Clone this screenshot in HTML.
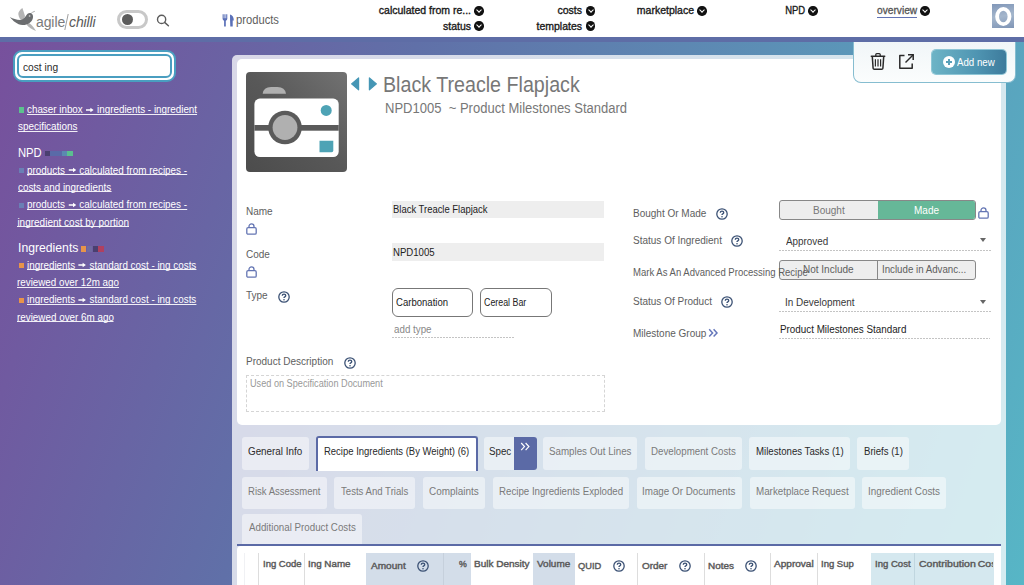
<!DOCTYPE html>
<html><head><meta charset="utf-8">
<style>
*{box-sizing:border-box;margin:0;padding:0}
html,body{width:1024px;height:585px;overflow:hidden}
body{position:relative;font-family:"Liberation Sans",sans-serif;background:linear-gradient(110deg,#784f9c 0%,#6070a8 35%,#57b6c6 100%);color:#333}
.a{position:absolute;white-space:nowrap;line-height:1}
#hdr{position:absolute;left:0;top:0;width:1024px;height:42px;background:#fff;border-bottom:5px solid #5e6da6}
.nav{font-size:10.5px;color:#1a1a1a;-webkit-text-stroke:0.35px #1a1a1a}
.dd{position:absolute;width:9.5px;height:9.5px;border-radius:50%;background:#111}
.dd:after{content:"";position:absolute;left:3.2px;top:2.4px;width:3px;height:3px;border-right:1.4px solid #fff;border-bottom:1.4px solid #fff;transform:rotate(45deg)}
#side a{color:#fff}
.sl{font-size:10px;color:#fff;border-bottom:1px solid rgba(255,255,255,0.9);line-height:10px;height:9.6px}
.sq{position:absolute;width:5.3px;height:5.3px}
#panel{position:absolute;left:232px;top:55px;width:774px;height:540px;background:rgba(255,255,255,0.75);border-radius:5px 5px 0 0}
#card{position:absolute;left:237px;top:59px;width:764px;height:366px;background:#fff;border-radius:5px}
.lbl{font-size:10px;color:#5e5e5e}
.help{position:absolute}
.tab{position:absolute;height:32px;background:#e8edf3;border-radius:3px;font-size:10px;color:#777;line-height:32px;padding-left:9px}
.tab.dk{color:#222}
.th{position:absolute;font-size:9px;color:#5a5a5a;-webkit-text-stroke:0.4px #5a5a5a;line-height:1}
.shade{position:absolute;background:#d5e1ea}
.vl{position:absolute;width:1px;background:#ddd}
</style></head><body>
<div id="hdr"></div>
<!-- logo -->
<svg class="a" style="left:5px;top:3px" width="40" height="30" viewBox="0 0 40 30">
  <path d="M17.4 4.9 C15 6.5 13.2 9 13.3 11 C13.6 14.5 15.5 17.5 18.5 18.8 L20 13 C19.2 10 18.3 7.5 17.4 4.9Z" fill="#b4b4b4"/>
  <path d="M21.5 21.5 C23.5 24 27 26.8 31 28 C29.5 25.5 28 23.5 26 21.5 L24 20Z" fill="#b4b4b4"/>
  <path d="M4.9 14.1 C8 18 12 21.8 17.5 22 C22.5 22.2 26.5 19.5 27.8 15.5 C28.5 13 27.8 10.5 25.5 10 C23.5 9.6 22 10.8 21 12.8 C19.5 15.5 17.5 17 15 17 C11.5 17 8 15.8 4.9 14.1Z" fill="#6b6d6f"/>
  <path d="M26 10.5 C27 9.5 28.3 8.7 29.8 8.3" stroke="#aaa" stroke-width="1" fill="none"/>
  <circle cx="24.6" cy="13" r="0.9" fill="#bbb"/>
</svg>
<div class="a" style="left:36px;top:14.5px;font-size:14px;color:#7a7a7a;letter-spacing:-0.1px">agile</div>
<div class="a" style="left:65.5px;top:13.5px;width:1.2px;height:16px;background:#a0a0a0;transform:skewX(-12deg)"></div>
<div class="a" style="left:69px;top:14.5px;font-size:14px;color:#5a5a5a;font-style:italic;letter-spacing:-0.1px">chilli</div>
<!-- toggle -->
<div class="a" style="left:117px;top:10px;width:31px;height:19px;border:3px solid #c8c8c8;border-radius:10px;background:#fff"></div>
<div class="a" style="left:121.5px;top:14.2px;width:11px;height:11px;border-radius:50%;background:#5c5c5c"></div>
<!-- search -->
<svg class="a" style="left:156px;top:14px" width="14" height="13" viewBox="0 0 14 13"><circle cx="5.6" cy="5.4" r="4.1" stroke="#5c5c5c" stroke-width="1.4" fill="none"/><path d="M8.6 8.4 L12.4 11.8" stroke="#5c5c5c" stroke-width="1.5" stroke-linecap="round"/></svg>
<!-- products -->
<svg class="a" style="left:222px;top:14px" width="13" height="13" viewBox="0 0 13 13"><path d="M0.6 0.3 H1.7 V4.2 H2.4 V0.3 H3.5 V4.2 H4.2 V0.3 H5.3 V4.8 Q5.3 6.4 3.8 6.8 V12.4 H2.1 V6.8 Q0.6 6.4 0.6 4.8Z" fill="#5a70b8"/><path d="M8 0.6 Q11.8 1.6 11.8 6.6 H10.7 V12.4 H8.3 Q8 6 8 0.6Z" fill="#5a70b8"/></svg>
<div class="a" style="left:236.07px;top:14px;font-size:12px;color:#5e5e5e;transform-origin:0 0;transform:scaleX(0.933)">products</div>
<!-- nav -->
<div class="a nav" style="right:553px;top:5px">calculated from re...</div><div class="dd" style="left:474px;top:6px"></div>
<div class="a nav" style="right:553px;top:21px">status</div><div class="dd" style="left:474px;top:21px"></div>
<div class="a nav" style="right:442px;top:5px">costs</div><div class="dd" style="left:585.5px;top:6px"></div>
<div class="a nav" style="right:442px;top:21px">templates</div><div class="dd" style="left:585.5px;top:21px"></div>
<div class="a nav" style="right:330px;top:5px">marketplace</div><div class="dd" style="left:697px;top:6px"></div>
<div class="a nav" style="right:218.5px;top:5px;transform-origin:100% 0;transform:scaleX(0.9)">NPD</div><div class="dd" style="left:808px;top:6px"></div>
<div class="a nav" style="left:876.8px;top:5px;color:#555;-webkit-text-stroke:0.3px #555;transform-origin:0 0;transform:scaleX(0.97)">overview</div><div class="a" style="left:877px;top:16.8px;width:40.4px;height:1.3px;background:#6273b4"></div><div class="dd" style="left:920px;top:6px"></div>
<!-- avatar -->
<div class="a" style="left:991.7px;top:4.3px;width:22.8px;height:23.4px;background:linear-gradient(170deg,#8197b8,#a4b6cc 50%,#7f95b6)"></div>
<svg class="a" style="left:992px;top:4.5px" width="23" height="23" viewBox="0 0 23 23"><ellipse cx="11.3" cy="11.5" rx="6.2" ry="7.6" stroke="#fff" stroke-width="3.8" fill="none"/></svg>

<!-- sidebar -->
<div class="a" style="left:13px;top:50px;width:163px;height:32px;border:2px solid #4a9ec0;border-radius:9px;background:#fff"></div>
<div class="a" style="left:17px;top:54px;width:155px;height:24px;border:2px solid #4a9ec0;border-radius:6px;background:#fff"></div>
<div class="a" style="left:22.73px;top:62px;font-size:10.5px;color:#2a2a2a;transform-origin:0 0;transform:scaleX(0.971)">cost ing</div>

<div class="sq" style="left:18.5px;top:107.3px;background:#5cc18e"></div>
<div class="a sl" style="left:27.0px;top:105px;transform-origin:0 0;transform:scaleX(0.983)">chaser inbox <svg width="8" height="6" viewBox="0 0 8 6" style="vertical-align:0.5px;margin:0 0.5px"><path d="M0 3 H6" stroke="#fff" stroke-width="1.3"/><path d="M4.5 0.8 L7.8 3 L4.5 5.2Z" fill="#fff"/></svg> ingredients - ingredient</div>
<div class="a sl" style="left:17.61px;top:122px;transform-origin:0 0;transform:scaleX(0.992)">specifications</div>
<div class="a" style="left:17.86px;top:147px;font-size:12px;color:#fff;transform-origin:0 0;transform:scaleX(0.937)">NPD</div>
<div class="sq" style="left:45.2px;top:151.2px;width:5px;background:#4a3f70"></div>
<div class="sq" style="left:50.2px;top:151.2px;width:11.6px;background:#5a6aa8"></div>
<div class="sq" style="left:61.8px;top:151.2px;width:5.2px;background:#5b8ab0"></div>
<div class="sq" style="left:67px;top:151.2px;width:5.7px;background:#5bbf90"></div>
<div class="sq" style="left:18.5px;top:167.8px;background:#6a7fb5"></div>
<div class="a sl" style="left:26.61px;top:165.5px;transform-origin:0 0;transform:scaleX(0.989)">products <svg width="8" height="6" viewBox="0 0 8 6" style="vertical-align:0.5px;margin:0 0.5px"><path d="M0 3 H6" stroke="#fff" stroke-width="1.3"/><path d="M4.5 0.8 L7.8 3 L4.5 5.2Z" fill="#fff"/></svg> calculated from recipes -</div>
<div class="a sl" style="left:18.4px;top:182.5px;transform-origin:0 0;transform:scaleX(0.985)">costs and ingredients</div>
<div class="sq" style="left:18.5px;top:202.5px;background:#6a7fb5"></div>
<div class="a sl" style="left:26.61px;top:200px;transform-origin:0 0;transform:scaleX(0.989)">products <svg width="8" height="6" viewBox="0 0 8 6" style="vertical-align:0.5px;margin:0 0.5px"><path d="M0 3 H6" stroke="#fff" stroke-width="1.3"/><path d="M4.5 0.8 L7.8 3 L4.5 5.2Z" fill="#fff"/></svg> calculated from recipes -</div>
<div class="a sl" style="left:17.39px;top:217.5px;transform-origin:0 0;transform:scaleX(1.0)">ingredient cost by portion</div>
<div class="a" style="left:17.83px;top:242px;font-size:12.6px;color:#fff;transform-origin:0 0;transform:scaleX(0.969)">Ingredients</div>
<div class="sq" style="left:81.3px;top:246.3px;width:5.2px;background:#e8944a"></div>
<div class="sq" style="left:86.5px;top:246.3px;width:5.5px;background:#6f6aa0"></div>
<div class="sq" style="left:93px;top:246.3px;width:5px;background:#4a3f70"></div>
<div class="sq" style="left:98px;top:246.3px;width:5.5px;background:#b04060"></div>
<div class="sq" style="left:18.5px;top:263.2px;background:#e8944a"></div>
<div class="a sl" style="left:26.6px;top:260.5px;transform-origin:0 0;transform:scaleX(0.985)">ingredients <svg width="8" height="6" viewBox="0 0 8 6" style="vertical-align:0.5px;margin:0 0.5px"><path d="M0 3 H6" stroke="#fff" stroke-width="1.3"/><path d="M4.5 0.8 L7.8 3 L4.5 5.2Z" fill="#fff"/></svg> standard cost - ing costs</div>
<div class="a sl" style="left:17.42px;top:278px;transform-origin:0 0;transform:scaleX(0.981)">reviewed over 12m ago</div>
<div class="sq" style="left:18.5px;top:297.5px;background:#e8944a"></div>
<div class="a sl" style="left:26.6px;top:295px;transform-origin:0 0;transform:scaleX(0.985)">ingredients <svg width="8" height="6" viewBox="0 0 8 6" style="vertical-align:0.5px;margin:0 0.5px"><path d="M0 3 H6" stroke="#fff" stroke-width="1.3"/><path d="M4.5 0.8 L7.8 3 L4.5 5.2Z" fill="#fff"/></svg> standard cost - ing costs</div>
<div class="a sl" style="left:17.42px;top:312.5px;transform-origin:0 0;transform:scaleX(0.985)">reviewed over 6m ago</div>

<!-- panel -->
<div id="panel"></div>
<div id="card"></div>

<!-- product header -->
<div class="a" style="left:246px;top:72px;width:101px;height:100px;border-radius:4px;background:linear-gradient(45deg,#4c4c4c 0%,#585858 50%,#727272 100%)"></div>
<svg class="a" style="left:246px;top:72px" width="101" height="100" viewBox="0 0 101 100">
 <path d="M16.6 21.8 Q17.5 15 25 15 H31.5 Q39 15 40 21.8Z" fill="#b0b0b0"/>
 <rect x="8.4" y="26.6" width="84.3" height="58.4" rx="5.5" fill="#fff"/>
 <rect x="8.4" y="53" width="84.3" height="5.7" fill="#5a5a5a"/>
 <circle cx="39" cy="55.5" r="16.8" fill="#5a5a5a"/>
 <circle cx="39" cy="55.5" r="12.4" fill="#b0b0b0"/>
 <circle cx="80.2" cy="38.4" r="5.5" fill="#4ea3b5"/>
 <path d="M73.5 68.7 H87.3 V78.5 Q87.3 80.2 85.6 80.2 H73.5Z" fill="#4ea3b5"/>
</svg>
<svg class="a" style="left:350px;top:77px" width="28" height="14" viewBox="0 0 28 14"><path d="M8.6 1 V12.8 L1.6 6.9Z" fill="#4596b5" stroke="#4596b5" stroke-width="1.2" stroke-linejoin="round"/><path d="M19.4 1 V12.8 L26.4 6.9Z" fill="#4596b5" stroke="#4596b5" stroke-width="1.2" stroke-linejoin="round"/></svg>
<div class="a" style="left:383px;top:74px;font-size:22px;color:#777;transform-origin:0 0;transform:scaleX(0.894)">Black Treacle Flapjack</div>
<div class="a" style="left:385px;top:101px;font-size:14px;color:#777;transform-origin:0 0;transform:scaleX(0.93)">NPD1005&nbsp; ~ Product Milestones Standard</div>

<!-- form left -->
<div class="a lbl" style="left:246px;top:207.3px">Name</div>
<svg class="a lock" style="left:246px;top:223px" width="11" height="12" viewBox="0 0 11 12"><path d="M3 4.6 V3.4 A2.5 2.5 0 0 1 8 3.4 V4.6" stroke="#6475b3" stroke-width="1.3" fill="none"/><rect x="0.8" y="4.6" width="9.4" height="6.6" rx="1.3" stroke="#6475b3" stroke-width="1.3" fill="none"/></svg>
<div class="a" style="left:392px;top:201px;width:212px;height:17px;background:#eee"></div>
<div class="a" style="left:393.15px;top:204.7px;font-size:10px;color:#222;transform-origin:0 0;transform:scaleX(0.945)">Black Treacle Flapjack</div>
<div class="a lbl" style="left:246px;top:250.3px">Code</div>
<svg class="a lock" style="left:246px;top:266px" width="11" height="12" viewBox="0 0 11 12"><path d="M3 4.6 V3.4 A2.5 2.5 0 0 1 8 3.4 V4.6" stroke="#6475b3" stroke-width="1.3" fill="none"/><rect x="0.8" y="4.6" width="9.4" height="6.6" rx="1.3" stroke="#6475b3" stroke-width="1.3" fill="none"/></svg>
<div class="a" style="left:392px;top:243px;width:212px;height:18px;background:#eee"></div>
<div class="a" style="left:393.14px;top:247.8px;font-size:10px;color:#222;transform-origin:0 0;transform:scaleX(0.96)">NPD1005</div>
<div class="a lbl" style="left:246px;top:291.3px">Type</div>
<svg class="help" style="left:278px;top:290.8px" width="12" height="12" viewBox="0 0 12 12"><circle cx="6" cy="6" r="5.2" stroke="#3c5275" stroke-width="1.3" fill="none"/><path d="M4.3 4.7 Q4.3 3.1 6 3.1 Q7.7 3.1 7.7 4.6 Q7.7 5.5 6.8 5.9 Q6 6.3 6 7.1" stroke="#3c5275" stroke-width="1.4" fill="none"/><circle cx="6" cy="8.7" r="0.8" fill="#3c5275"/></svg>
<div class="a" style="left:392px;top:288px;width:81px;height:29px;border:1px solid #777;border-radius:6px"></div>
<div class="a" style="left:396.45px;top:297.6px;font-size:10px;color:#222;transform-origin:0 0;transform:scaleX(0.955)">Carbonation</div>
<div class="a" style="left:480px;top:288px;width:72px;height:29px;border:1px solid #777;border-radius:6px"></div>
<div class="a" style="left:484.21px;top:297.6px;font-size:10px;color:#222;transform-origin:0 0;transform:scaleX(0.885)">Cereal Bar</div>
<div class="a" style="left:394.1px;top:324.5px;font-size:10px;color:#888;transform-origin:0 0;transform:scaleX(0.979)">add type</div>
<div class="a" style="left:392px;top:337px;width:123px;height:1px;background:repeating-linear-gradient(90deg,#c4c4c4 0 2px,transparent 2px 3px)"></div>
<div class="a lbl" style="left:246px;top:357.3px">Product Description</div>
<svg class="help" style="left:344px;top:356.8px" width="12" height="12" viewBox="0 0 12 12"><circle cx="6" cy="6" r="5.2" stroke="#3c5275" stroke-width="1.3" fill="none"/><path d="M4.3 4.7 Q4.3 3.1 6 3.1 Q7.7 3.1 7.7 4.6 Q7.7 5.5 6.8 5.9 Q6 6.3 6 7.1" stroke="#3c5275" stroke-width="1.4" fill="none"/><circle cx="6" cy="8.7" r="0.8" fill="#3c5275"/></svg>
<div class="a" style="left:246px;top:375px;width:359px;height:37px;border:1px dashed #d5d5d5"></div>
<div class="a" style="left:250px;top:379px;font-size:10px;color:#999;transform-origin:0 0;transform:scaleX(0.915)">Used on Specification Document</div>

<!-- form right -->
<div class="a lbl" style="left:633px;top:209.3px">Bought Or Made</div>
<svg class="help" style="left:716px;top:207.8px" width="12" height="12" viewBox="0 0 12 12"><circle cx="6" cy="6" r="5.2" stroke="#3c5275" stroke-width="1.3" fill="none"/><path d="M4.3 4.7 Q4.3 3.1 6 3.1 Q7.7 3.1 7.7 4.6 Q7.7 5.5 6.8 5.9 Q6 6.3 6 7.1" stroke="#3c5275" stroke-width="1.4" fill="none"/><circle cx="6" cy="8.7" r="0.8" fill="#3c5275"/></svg>
<div class="a" style="left:779px;top:200px;width:197px;height:20px;border:1px solid #888;border-radius:3px;background:#eee;overflow:hidden"><div style="position:absolute;left:98px;top:0;width:99px;height:20px;background:#66b898"></div></div>
<div class="a" style="left:813px;top:205.5px;font-size:10px;color:#777">Bought</div>
<div class="a" style="left:914px;top:205.5px;font-size:10px;color:#fff">Made</div>
<svg class="a lock" style="left:978px;top:207px" width="11" height="12" viewBox="0 0 11 12"><path d="M3 4.6 V3.4 A2.5 2.5 0 0 1 8 3.4 V4.6" stroke="#6475b3" stroke-width="1.3" fill="none"/><rect x="0.8" y="4.6" width="9.4" height="6.6" rx="1.3" stroke="#6475b3" stroke-width="1.3" fill="none"/></svg>
<div class="a lbl" style="left:633px;top:236.3px">Status Of Ingredient</div>
<svg class="help" style="left:731px;top:234.8px" width="12" height="12" viewBox="0 0 12 12"><circle cx="6" cy="6" r="5.2" stroke="#3c5275" stroke-width="1.3" fill="none"/><path d="M4.3 4.7 Q4.3 3.1 6 3.1 Q7.7 3.1 7.7 4.6 Q7.7 5.5 6.8 5.9 Q6 6.3 6 7.1" stroke="#3c5275" stroke-width="1.4" fill="none"/><circle cx="6" cy="8.7" r="0.8" fill="#3c5275"/></svg>
<div class="a" style="left:785.7px;top:236.8px;font-size:10px;color:#383838;transform-origin:0 0;transform:scaleX(0.986)">Approved</div>
<div class="a" style="left:980px;top:238px;width:0;height:0;border-left:3.5px solid transparent;border-right:3.5px solid transparent;border-top:4px solid #666"></div>
<div class="a" style="left:779px;top:250px;width:212px;height:1px;background:repeating-linear-gradient(90deg,#c4c4c4 0 2px,transparent 2px 3px)"></div>
<div class="a" style="left:779px;top:260px;width:197px;height:20px;border:1px solid #888;border-radius:3px;background:#eee"><div style="position:absolute;left:97.4px;top:0;width:1px;height:18px;background:#888"></div></div>
<div class="a lbl" style="left:633px;top:268.3px;transform-origin:0 0;transform:scaleX(0.953)">Mark As An Advanced Processing Recipe</div>
<div class="a" style="left:803.0px;top:265px;font-size:10px;color:#606060;transform-origin:0 0;transform:scaleX(1.0)">Not Include</div>
<div class="a" style="left:882.03px;top:265px;font-size:10px;color:#606060;transform-origin:0 0;transform:scaleX(0.971)">Include in Advanc...</div>
<div class="a lbl" style="left:633px;top:297.1px">Status Of Product</div>
<svg class="help" style="left:721px;top:295.8px" width="12" height="12" viewBox="0 0 12 12"><circle cx="6" cy="6" r="5.2" stroke="#3c5275" stroke-width="1.3" fill="none"/><path d="M4.3 4.7 Q4.3 3.1 6 3.1 Q7.7 3.1 7.7 4.6 Q7.7 5.5 6.8 5.9 Q6 6.3 6 7.1" stroke="#3c5275" stroke-width="1.4" fill="none"/><circle cx="6" cy="8.7" r="0.8" fill="#3c5275"/></svg>
<div class="a" style="left:784.71px;top:297.8px;font-size:10px;color:#383838;transform-origin:0 0;transform:scaleX(0.994)">In Development</div>
<div class="a" style="left:980px;top:300px;width:0;height:0;border-left:3.5px solid transparent;border-right:3.5px solid transparent;border-top:4px solid #666"></div>
<div class="a" style="left:779px;top:311px;width:212px;height:1px;background:repeating-linear-gradient(90deg,#c4c4c4 0 2px,transparent 2px 3px)"></div>
<div class="a lbl" style="left:633px;top:329.3px">Milestone Group</div>
<svg class="a" style="left:707.5px;top:328px" width="11" height="10" viewBox="0 0 11 10"><path d="M1.2 1.2 L4.6 4.9 L1.2 8.6 M5.6 1.2 L9 4.9 L5.6 8.6" stroke="#6577bb" stroke-width="1.5" fill="none"/></svg>
<div class="a" style="left:779.62px;top:325px;font-size:10px;color:#222;transform-origin:0 0;transform:scaleX(0.984)">Product Milestones Standard</div>
<div class="a" style="left:779px;top:338px;width:211px;height:1px;background:repeating-linear-gradient(90deg,#c4c4c4 0 2px,transparent 2px 3px)"></div>

<!-- action box -->
<div class="a" style="left:852.5px;top:42px;width:163.2px;height:40.5px;background:linear-gradient(180deg,#f1f6f8,#fbfdfd);border:1px solid #86bdd0;border-top:none;border-radius:0 0 8px 8px"></div>
<svg class="a" style="left:870px;top:52px" width="16" height="19" viewBox="0 0 16 19">
 <path d="M1.3 4.3 H14.7" stroke="#2a2a2a" stroke-width="1.5" stroke-linecap="round"/>
 <path d="M5.8 4 V2.6 Q5.8 1.6 6.8 1.6 H9.2 Q10.2 1.6 10.2 2.6 V4" stroke="#2a2a2a" stroke-width="1.3" fill="none"/>
 <path d="M2.3 4.6 L3.1 16.2 Q3.2 17.3 4.3 17.3 H11.7 Q12.8 17.3 12.9 16.2 L13.7 4.6" stroke="#2a2a2a" stroke-width="1.5" fill="none"/>
 <path d="M5.4 7.2 V14.6 M8 7.2 V14.6 M10.6 7.2 V14.6" stroke="#2a2a2a" stroke-width="1.2"/>
</svg>
<svg class="a" style="left:898px;top:53px" width="17" height="17" viewBox="0 0 17 17"><path d="M6.5 2.6 H1.8 V15.2 H14.2 V10.5" stroke="#2a2a2a" stroke-width="1.5" fill="none" stroke-linejoin="round"/><path d="M10 1.8 H15.2 V7" stroke="#2a2a2a" stroke-width="1.5" fill="none"/><path d="M15 2 L7.5 9.5" stroke="#2a2a2a" stroke-width="1.5"/></svg>
<div class="a" style="left:932px;top:50.2px;width:74.3px;height:23.8px;border-radius:4px;background:linear-gradient(90deg,#6db4c6,#4f95b2 60%,#3d7b9c);box-shadow:0 0 0 1px #8ec6d6"></div>
<div class="a" style="left:943px;top:56px;width:12px;height:12px;border-radius:50%;background:#fff"></div>
<div class="a" style="left:945.6px;top:61.3px;width:6.8px;height:1.3px;background:#5aa0b9"></div>
<div class="a" style="left:948.25px;top:58.65px;width:1.3px;height:6.8px;background:#5aa0b9"></div>
<div class="a" style="left:957.4px;top:57.4px;font-size:10.5px;color:#fff;transform-origin:0 0;transform:scaleX(0.924)">Add new</div>

<!-- tabs -->
<div class="a" style="left:241.5px;top:437px;width:67.5px;height:32.8px;background:rgba(255,255,255,0.47);border-radius:3px;"></div>
<div class="a" style="left:247.52px;top:447px;font-size:10px;color:#2a2a2a;transform-origin:0 0;transform:scaleX(0.983)">General Info</div>
<div class="a" style="left:316px;top:435.5px;width:162.4px;height:35.5px;background:#fff;border:2px solid #5b6aa6;border-bottom:none;border-radius:3px 3px 0 0"></div>
<div class="a" style="left:324.45px;top:447px;font-size:10px;color:#2a2a2a;transform-origin:0 0;transform:scaleX(0.948)">Recipe Ingredients (By Weight) (6)</div>
<div class="a" style="left:484px;top:437px;width:52.6px;height:32.8px;background:rgba(255,255,255,0.47);border-radius:3px;"></div>
<div class="a" style="left:489.02px;top:447px;font-size:10px;color:#2a2a2a;transform-origin:0 0;transform:scaleX(0.976)">Spec</div>
<div class="a" style="left:514px;top:437px;width:22.6px;height:32.8px;background:#5b6aa6;border-radius:0 3px 3px 0"></div>
<svg class="a" style="left:520px;top:441.5px" width="11" height="10" viewBox="0 0 11 10"><path d="M1.2 1 L4.5 4.6 L1.2 8.2 M5.6 1 L8.9 4.6 L5.6 8.2" stroke="#fff" stroke-width="1.2" fill="none"/></svg>
<div class="a" style="left:543px;top:437px;width:94px;height:32.8px;background:rgba(255,255,255,0.47);border-radius:3px;"></div>
<div class="a" style="left:549.02px;top:447px;font-size:10px;color:#7a7a7a;transform-origin:0 0;transform:scaleX(0.976)">Samples Out Lines</div>
<div class="a" style="left:644.5px;top:437px;width:97.8px;height:32.8px;background:rgba(255,255,255,0.47);border-radius:3px;"></div>
<div class="a" style="left:650.63px;top:447px;font-size:10px;color:#7a7a7a;transform-origin:0 0;transform:scaleX(0.972)">Development Costs</div>
<div class="a" style="left:749.4px;top:437px;width:100.6px;height:32.8px;background:rgba(255,255,255,0.47);border-radius:3px;"></div>
<div class="a" style="left:755.54px;top:447px;font-size:10px;color:#2a2a2a;transform-origin:0 0;transform:scaleX(0.964)">Milestones Tasks (1)</div>
<div class="a" style="left:857px;top:437px;width:51.8px;height:32.8px;background:rgba(255,255,255,0.47);border-radius:3px;"></div>
<div class="a" style="left:863.64px;top:447px;font-size:10px;color:#2a2a2a;transform-origin:0 0;transform:scaleX(0.959)">Briefs (1)</div>
<div class="a" style="left:241.5px;top:477px;width:85.1px;height:32px;background:rgba(255,255,255,0.47);border-radius:3px;"></div>
<div class="a" style="left:247.55px;top:486.7px;font-size:10px;color:#7a7a7a;transform-origin:0 0;transform:scaleX(0.952)">Risk Assessment</div>
<div class="a" style="left:334.1px;top:477px;width:81.4px;height:32px;background:rgba(255,255,255,0.47);border-radius:3px;"></div>
<div class="a" style="left:341.3px;top:486.7px;font-size:10px;color:#7a7a7a;transform-origin:0 0;transform:scaleX(0.96)">Tests And Trials</div>
<div class="a" style="left:422.6px;top:477px;width:62.9px;height:32px;background:rgba(255,255,255,0.47);border-radius:3px;"></div>
<div class="a" style="left:428.6px;top:486.7px;font-size:10px;color:#7a7a7a;transform-origin:0 0;transform:scaleX(0.996)">Complaints</div>
<div class="a" style="left:492.5px;top:477px;width:136.5px;height:32px;background:rgba(255,255,255,0.47);border-radius:3px;"></div>
<div class="a" style="left:498.53px;top:486.7px;font-size:10px;color:#7a7a7a;transform-origin:0 0;transform:scaleX(0.971)">Recipe Ingredients Exploded</div>
<div class="a" style="left:636.6px;top:477px;width:105.3px;height:32px;background:rgba(255,255,255,0.47);border-radius:3px;"></div>
<div class="a" style="left:641.92px;top:486.7px;font-size:10px;color:#7a7a7a;transform-origin:0 0;transform:scaleX(0.982)">Image Or Documents</div>
<div class="a" style="left:749.8px;top:477px;width:104.9px;height:32px;background:rgba(255,255,255,0.47);border-radius:3px;"></div>
<div class="a" style="left:755.52px;top:486.7px;font-size:10px;color:#7a7a7a;transform-origin:0 0;transform:scaleX(0.98)">Marketplace Request</div>
<div class="a" style="left:861.8px;top:477px;width:84.0px;height:32px;background:rgba(255,255,255,0.47);border-radius:3px;"></div>
<div class="a" style="left:867.51px;top:486.7px;font-size:10px;color:#7a7a7a;transform-origin:0 0;transform:scaleX(0.989)">Ingredient Costs</div>
<div class="a" style="left:241.5px;top:514.2px;width:120.3px;height:30.0px;background:rgba(255,255,255,0.47);border-radius:3px;border-radius:3px 3px 0 0"></div>
<div class="a" style="left:248.5px;top:523.4px;font-size:10px;color:#7a7a7a;transform-origin:0 0;transform:scaleX(0.975)">Additional Product Costs</div>

<!-- table -->
<div class="a" style="left:237px;top:544.3px;width:764px;height:2px;background:#5b6aa6"></div>
<div class="a" style="left:237px;top:546.3px;width:764px;height:40px;background:#fff;border-radius:4px 0 0 0"></div>
<div class="vl" style="left:243.5px;top:552.7px;height:40px;background:#f0f1f4"></div>
<div class="vl" style="left:258px;top:552.7px;height:40px"></div>
<div class="vl" style="left:304px;top:552.7px;height:40px"></div>
<div class="shade" style="left:366px;top:553.3px;width:104.5px;height:40px;background:#d3dde9"></div>
<div class="vl" style="left:443px;top:553.3px;height:40px;background:#c6d0dc"></div>
<div class="shade" style="left:532.7px;top:553.3px;width:42px;height:40px;background:#d3dde9"></div>
<div class="vl" style="left:637px;top:552.7px;height:40px"></div>
<div class="vl" style="left:703.5px;top:552.7px;height:40px"></div>
<div class="vl" style="left:770px;top:552.7px;height:40px"></div>
<div class="vl" style="left:817px;top:552.7px;height:40px"></div>
<div class="shade" style="left:871.3px;top:553.3px;width:122.5px;height:40px;background:#d5e8ef"></div>
<div class="vl" style="left:914px;top:553.3px;height:40px;background:#c0d6df"></div>
<div class="a th" style="left:262.6px;top:560.3px;transform-origin:0 0;transform:scaleX(1.057)">Ing Code</div>
<div class="a th" style="left:307.81px;top:560.3px;transform-origin:0 0;transform:scaleX(1.089)">Ing Name</div>
<div class="a th" style="left:370.8px;top:562.2px;transform-origin:0 0;transform:scaleX(1.119)">Amount</div>
<div class="a th" style="left:458.5px;top:560.3px;transform-origin:0 0;transform:scaleX(0.975)">%</div>
<div class="a th" style="left:474.1px;top:560.3px;transform-origin:0 0;transform:scaleX(1.11)">Bulk Density</div>
<div class="a th" style="left:537.4px;top:560.3px;transform-origin:0 0;transform:scaleX(1.107)">Volume</div>
<div class="a th" style="left:578.4px;top:562.2px;transform-origin:0 0;transform:scaleX(1.032)">QUID</div>
<div class="a th" style="left:641.6px;top:562.2px;transform-origin:0 0;transform:scaleX(1.104)">Order</div>
<div class="a th" style="left:708.0px;top:562.2px;transform-origin:0 0;transform:scaleX(1.104)">Notes</div>
<div class="a th" style="left:774.4px;top:560.3px;transform-origin:0 0;transform:scaleX(1.117)">Approval</div>
<div class="a th" style="left:820.94px;top:560.3px;transform-origin:0 0;transform:scaleX(1.057)">Ing Sup</div>
<div class="a th" style="left:874.94px;top:560.3px;transform-origin:0 0;transform:scaleX(1.061)">Ing Cost</div>
<div class="a" style="left:918.9px;top:560.3px;width:74.6px;height:14px;overflow:hidden"><div class="th" style="position:static;white-space:nowrap;line-height:1;transform-origin:0 0;transform:scaleX(1.17);word-spacing:-0.8px">Contribution Costs</div></div>
<svg class="help" style="left:417.3px;top:559.9px" width="12" height="12" viewBox="0 0 12 12"><circle cx="6" cy="6" r="5.2" stroke="#3c5275" stroke-width="1.3" fill="none"/><path d="M4.3 4.7 Q4.3 3.1 6 3.1 Q7.7 3.1 7.7 4.6 Q7.7 5.5 6.8 5.9 Q6 6.3 6 7.1" stroke="#3c5275" stroke-width="1.4" fill="none"/><circle cx="6" cy="8.7" r="0.8" fill="#3c5275"/></svg>
<svg class="help" style="left:612.8px;top:559.9px" width="12" height="12" viewBox="0 0 12 12"><circle cx="6" cy="6" r="5.2" stroke="#3c5275" stroke-width="1.3" fill="none"/><path d="M4.3 4.7 Q4.3 3.1 6 3.1 Q7.7 3.1 7.7 4.6 Q7.7 5.5 6.8 5.9 Q6 6.3 6 7.1" stroke="#3c5275" stroke-width="1.4" fill="none"/><circle cx="6" cy="8.7" r="0.8" fill="#3c5275"/></svg>
<svg class="help" style="left:678.7px;top:559.9px" width="12" height="12" viewBox="0 0 12 12"><circle cx="6" cy="6" r="5.2" stroke="#3c5275" stroke-width="1.3" fill="none"/><path d="M4.3 4.7 Q4.3 3.1 6 3.1 Q7.7 3.1 7.7 4.6 Q7.7 5.5 6.8 5.9 Q6 6.3 6 7.1" stroke="#3c5275" stroke-width="1.4" fill="none"/><circle cx="6" cy="8.7" r="0.8" fill="#3c5275"/></svg>
<svg class="help" style="left:745px;top:559.9px" width="12" height="12" viewBox="0 0 12 12"><circle cx="6" cy="6" r="5.2" stroke="#3c5275" stroke-width="1.3" fill="none"/><path d="M4.3 4.7 Q4.3 3.1 6 3.1 Q7.7 3.1 7.7 4.6 Q7.7 5.5 6.8 5.9 Q6 6.3 6 7.1" stroke="#3c5275" stroke-width="1.4" fill="none"/><circle cx="6" cy="8.7" r="0.8" fill="#3c5275"/></svg>
</body></html>
